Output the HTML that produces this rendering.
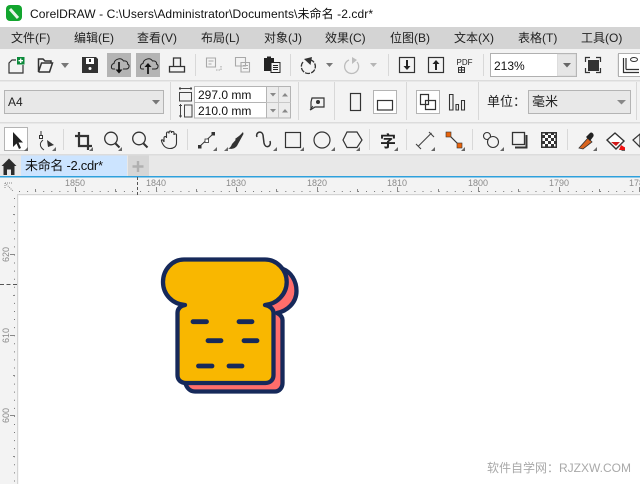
<!DOCTYPE html>
<html><head><meta charset="utf-8">
<style>
html,body{margin:0;padding:0;background:#fff;width:640px;height:484px;overflow:hidden}
svg{display:block;font-family:"Liberation Sans","Noto Sans CJK SC",sans-serif}
</style></head><body>
<svg xmlns="http://www.w3.org/2000/svg" width="640" height="484" viewBox="0 0 640 484">
<defs>
<pattern id="ck" width="6" height="6" patternUnits="userSpaceOnUse" x="221" y="132"><rect width="6" height="6" fill="#fff"/><rect width="3" height="3" fill="#333"/><rect x="3" y="3" width="3" height="3" fill="#333"/></pattern>
</defs>
<rect width="640" height="484" fill="#fff"/>
<!-- title -->
<rect x="6" y="5" width="16" height="16" rx="4" fill="#12a52e"/>
<path d="M10 9l8 9" stroke="#e8f5e8" stroke-width="3"/>
<text x="30" y="18" font-size="12" fill="#111" textLength="343">CorelDRAW - C:\Users\Administrator\Documents\未命名 -2.cdr*</text>
<!-- bars -->
<rect y="27" width="640" height="22" fill="#d4d4d4"/>
<rect y="49" width="640" height="128" fill="#f3f3f3"/>
<rect y="80" width="640" height="1.5" fill="#dcdcdc"/>
<rect y="122" width="640" height="1.5" fill="#dcdcdc"/>
<rect y="155" width="640" height="21" fill="#e8e8e8"/>
<rect y="154" width="640" height="1.5" fill="#dcdcdc"/>
<g font-size="12" fill="#222">
<text x="11" y="42">文件(F)</text><text x="74" y="42">编辑(E)</text><text x="137" y="42">查看(V)</text><text x="201" y="42">布局(L)</text><text x="264" y="42">对象(J)</text><text x="325" y="42">效果(C)</text><text x="390" y="42">位图(B)</text><text x="454" y="42">文本(X)</text><text x="518" y="42">表格(T)</text><text x="581" y="42">工具(O)</text>
</g>
<!-- separators -->
<g stroke="#d8d8d8" stroke-width="1">
<path d="M195.500 54V76M290.500 54V76M388.500 54V76M483.500 54V76M618 54V76"/>
<path d="M170.500 82V120M298.500 82V120M334.500 82V120M406.500 82V120M478.500 82V120M636.500 82V120"/>
<path d="M63.500 129V150M187.500 129V150M369.500 129V150M406.500 129V150M472.500 129V150M567.500 129V150"/>
</g>
<!-- toolbar 1 -->
<g fill="none" stroke="#333" stroke-width="1.200">
<path d="M16 60H12L9 63V73H23V65"/>
<path d="M38.500 72V59H43L45 61H51V63M38.500 72H49.500L52.500 63H41.500L38.500 72" stroke-width="1.500"/>
</g>
<rect x="17" y="57" width="7.500" height="7.500" fill="#0b8a3a"/><path d="M18.500 60.700H23M20.700 58.500V63" stroke="#fff" stroke-width="1.300"/>
<path d="M61 63H69L65 68Z" fill="#777"/>
<path d="M82 57H96L98 59V73H82Z" fill="#333"/><rect x="86" y="58" width="8" height="6" fill="#fff"/><rect x="89" y="59" width="2" height="3" fill="#333"/><circle cx="90" cy="68.500" r="1.500" fill="#fff"/>
<rect x="107" y="53" width="24" height="24" fill="#b4b4b4"/><rect x="136" y="53" width="24" height="24" fill="#b4b4b4"/>
<g fill="none" stroke="#222" stroke-width="1">
<path d="M115 69H113C110.500 69 111 64 114 63.500C114.500 59 121 57 123.500 61C127 60.500 128 63 127.500 64C130 65 129.500 69 126 69H123"/>
<path d="M144 69H142C139.500 69 140 64 143 63.500C143.500 59 150 57 152.500 61C156 60.500 157 63 156.500 64C159 65 158.500 69 155 69H152"/>
</g>
<path d="M119 62V71" stroke="#111" stroke-width="1.700"/><path d="M115.500 69.500H122.500L119 73.500Z" fill="#111"/>
<path d="M148 66V74" stroke="#111" stroke-width="1.700"/><path d="M144.500 67H151.500L148 63Z" fill="#111"/>
<path d="M173.500 66V58H180.500V66M169.500 66.500H184.500V72H169.500Z" fill="none" stroke="#333" stroke-width="1.300"/>
<g fill="none" stroke="#a8a8a8" stroke-width="1.100">
<path d="M206.500 58H215.500V67H206.500ZM208.500 61H213.500M208.500 64H211.500"/><path d="M216 70H221V65" stroke-dasharray="1.500 1"/>
<path d="M235.500 57.500H245.500V66H235.500ZM241 62.500H249.500V72H241ZM243 65.500H248M243 68.500H248"/>
</g>
<path d="M264 58H274V71H264Z" fill="#222"/><rect x="267" y="56.500" width="4" height="3" fill="#222"/>
<rect x="271" y="62.500" width="9" height="10" fill="#f3f3f3" stroke="#222"/><path d="M273 65.500H278M273 67.500H278M273 69.500H278" stroke="#222"/>
<path d="M303 62A7 7 0 1 0 311 60" fill="none" stroke="#333" stroke-width="1.300" stroke-dasharray="5 1.200"/><path d="M305 59L313 57L311.500 65Z" fill="#333" transform="translate(-1 0)"/>
<path d="M326 63H333L329.500 67Z" fill="#777"/>
<path d="M357 62A7 7 0 1 1 349 60" fill="none" stroke="#bdbdbd" stroke-width="1.300"/><path d="M352 57L357 60L352 64Z" fill="#bdbdbd"/>
<path d="M370 63H377L373.500 67Z" fill="#b5b5b5"/>
<rect x="399.500" y="57.500" width="15" height="15" fill="none" stroke="#333" stroke-width="1.200"/><path d="M407 60V67" stroke="#222" stroke-width="2"/><path d="M403.500 66H410.500L407 70Z" fill="#222"/>
<rect x="428.500" y="57.500" width="15" height="15" fill="none" stroke="#333" stroke-width="1.200"/><path d="M436 63V70" stroke="#222" stroke-width="2"/><path d="M432.500 64H439.500L436 60Z" fill="#222"/>
<text x="456.500" y="65" font-size="8" fill="#222" textLength="16">PDF</text>
<path d="M458.500 67.500H464.500V72.500H458.500ZM461.500 66V72.500M459 70H464" fill="none" stroke="#333"/>
<rect x="490.500" y="53.500" width="86" height="23" fill="#fff" stroke="#b0b0b0"/>
<rect x="557.500" y="54" width="18.500" height="22" fill="#e6e6e6" stroke="#c8c8c8" stroke-width="0.500"/>
<path d="M563 63H571L567 67.500Z" fill="#666"/>
<text x="494" y="70" font-size="12" fill="#111">213%</text>
<rect x="588" y="60" width="11" height="11" fill="#333"/>
<path d="M585.500 62V57.500H590M596 57.500H600.500V62M600.500 68V72.500H596M590 72.500H585.500V68" fill="none" stroke="#333" stroke-width="1.200"/>
<rect x="618.500" y="53.500" width="24" height="23" fill="#fff" stroke="#b0b0b0"/>
<path d="M623.500 58V72.500H639M626 69.500H639M626 58V69.500" fill="none" stroke="#333" stroke-width="1.200"/>
<ellipse cx="634" cy="59.500" rx="3.500" ry="2" fill="none" stroke="#333"/>
<!-- property bar -->
<rect x="4.500" y="90.500" width="159" height="23" fill="#e8e8e8" stroke="#b4b4b4"/>
<text x="8" y="106" font-size="12" fill="#222">A4</text>
<path d="M152 100H160L156 104.500Z" fill="#777"/>
<g fill="none" stroke="#444" stroke-width="1">
<rect x="179.500" y="92.500" width="12" height="8.500"/><path d="M179 88.500H192M180 87V90M191 87V90"/>
<rect x="184.500" y="105" width="7.500" height="12"/><path d="M180.500 104V117.500M179 105.500H182M179 116H182"/>
</g>
<rect x="194.500" y="86.500" width="72" height="31.500" fill="#fff" stroke="#b4b4b4"/>
<path d="M194.500 102.500H266.500" stroke="#b4b4b4"/>
<rect x="266.500" y="86.500" width="24" height="31.500" fill="#ececec" stroke="#b4b4b4"/>
<path d="M266.500 102.500H290.500M278.500 87V118" stroke="#c8c8c8"/>
<g fill="#888"><path d="M270 93H276L273 96.500ZM282 96.500H288L285 93ZM270 109H276L273 112.500ZM282 112.500H288L285 109Z"/></g>
<text x="198" y="99" font-size="12" fill="#111">297.0 mm</text>
<text x="198" y="115" font-size="12" fill="#111">210.0 mm</text>
<path d="M312 98H324V107H315L311 109.500V102Z" fill="none" stroke="#333" stroke-width="1.200"/><circle cx="318" cy="102" r="2" fill="#333"/><path d="M310 110L313 106" stroke="#333"/>
<rect x="350.500" y="93.500" width="10" height="17" fill="none" stroke="#333" stroke-width="1.200"/>
<rect x="373.500" y="90.500" width="23" height="23" fill="#fff" stroke="#b4b4b4"/>
<rect x="377.500" y="100.500" width="15" height="9.500" fill="none" stroke="#333" stroke-width="1.200"/>
<rect x="416.500" y="90.500" width="23" height="23" fill="#fff" stroke="#b4b4b4"/>
<path d="M420.500 94.500H428.500V104.500H420.500ZM425.500 100.500H435.500V109.500H425.500Z" fill="none" stroke="#333" stroke-width="1.200"/>
<path d="M449.500 94.500H453V110H449.500ZM456 104.500H458.500V110H456ZM461.500 100.500H464.500V110H461.500Z" fill="none" stroke="#333" stroke-width="1.100"/>
<text x="487" y="106" font-size="13" fill="#222">单位：</text>
<rect x="528.500" y="90.500" width="102" height="23" fill="#e8e8e8" stroke="#b4b4b4"/>
<text x="532" y="106" font-size="13" fill="#222">毫米</text>
<path d="M617 100H626L621.500 104.500Z" fill="#888"/>
<!-- toolbox -->
<rect x="4.500" y="127.500" width="23" height="23" fill="#fff" stroke="#b4b4b4"/>
<path d="M13 132V147L16.500 143.500L19 149L21 148L18.500 142.500H23Z" fill="#222"/>
<g fill="#666"><path d="M28 147V151H24ZM56 147V151H52ZM93 147V151H89ZM122 147V151H118ZM277 147V151H273ZM228 147V151H224ZM304 147V151H300ZM335 147V151H331ZM360 147V151H356ZM398 147V151H394ZM435 147V151H431ZM465 147V151H461ZM504 147V151H500ZM597 147V151H593ZM625 147V151H621ZM217 147V151H213Z"/></g>
<path d="M41 131V139M43 140C38 144 41 148 44 150" fill="none" stroke="#333"/><rect x="39.500" y="135.500" width="3" height="3" fill="#fff" stroke="#333"/><path d="M47 140L54 145L48 147Z" fill="#333"/>
<path d="M79 132V146H92M75 136H88V150" fill="none" stroke="#333" stroke-width="2.200"/>
<circle cx="111" cy="138.500" r="6.300" fill="none" stroke="#333" stroke-width="1.300"/><path d="M115.500 143.500L119.500 147.500" stroke="#333" stroke-width="2"/>
<circle cx="139" cy="138.500" r="6.300" fill="none" stroke="#333" stroke-width="1.300"/><path d="M143.500 143.500L147.500 147.500" stroke="#333" stroke-width="2"/>
<path d="M164 142V138C164 136 166.500 136 166.500 138V133.500C166.500 131.500 169 131.500 169 133.500V132.500C169 130.500 171.500 130.500 171.500 132.500V133C171.500 131 174 131 174 133V135C174 133.500 176.500 133.500 176.500 135V143C176.500 147 173 148.500 170 148.500C166 148.500 163 146 161.500 141C161 139.500 163 139 164 142Z" fill="none" stroke="#333" stroke-width="1.100"/>
<path d="M199 147L213 134" stroke="#333"/><rect x="198" y="145" width="3.500" height="3.500" fill="#333"/><rect x="205" y="139" width="3.500" height="3.500" fill="#fff" stroke="#333" stroke-width="0.800"/><rect x="211.500" y="132" width="3.500" height="3.500" fill="#333"/>
<path d="M243 133L237 141L235 139Z" fill="#333"/><path d="M243 132L236.500 139L232 144C231 147 229 148.500 228 148.500C231 149.500 236 149 238 144L243.500 134Z" fill="#333"/>
<path d="M257 137C255 132 262 130 263 135L264 143C265 149 272 147 270 141" fill="none" stroke="#333" stroke-width="1.500"/>
<rect x="285.500" y="132.500" width="15" height="15" fill="none" stroke="#333" stroke-width="1.200"/>
<circle cx="322" cy="140" r="8" fill="none" stroke="#333" stroke-width="1.200"/>
<path d="M347 132H357L362 140L357 147.500H347L343 140Z" fill="none" stroke="#333" stroke-width="1.200"/>
<text x="380" y="147" font-size="16" font-weight="bold" fill="#222">字</text>
<path d="M418.500 146L431.500 133M416 144L421 149M429 132L434 137" fill="none" stroke="#444" stroke-width="1.100"/>
<path d="M449 135L459 145" stroke="#333" stroke-width="1.200"/><rect x="446" y="132" width="5" height="5" fill="#e8630a" stroke="#333" stroke-width=".6"/><rect x="457" y="143" width="5" height="5" fill="#e8630a" stroke="#333" stroke-width=".6"/>
<circle cx="487" cy="136" r="3.500" fill="none" stroke="#333" stroke-width="1.100"/><circle cx="493" cy="142" r="5.500" fill="#f3f3f3" stroke="#333" stroke-width="1.100"/>
<rect x="512.500" y="132.500" width="12" height="12" fill="none" stroke="#333" stroke-width="1.300"/><path d="M526.500 135V147.500H515" fill="none" stroke="#333" stroke-width="2"/>
<rect x="541" y="132" width="16" height="16" fill="#333"/><rect x="542.500" y="133.500" width="13" height="13" fill="url(#ck)"/>
<path d="M579 148L588 138L592 142L583 149Z" fill="#d9641e" stroke="#333" stroke-width=".8"/><path d="M586 137L590 133C592 131 595 135 593 137L590 141Z" fill="#222"/>
<path d="M607 140L615 133L624 141L616 149Z" fill="#fff" stroke="#333" stroke-width="1.400"/><path d="M611 142H620L616 146Z" fill="#d01818"/><path d="M621 145L625 147.500V150H619Z" fill="#f01010"/>
<path d="M633 140L640 134V147Z" fill="none" stroke="#333" stroke-width="1.200"/>
<!-- tab row -->
<path d="M1.500 166L9 158.500L16.500 166H14.500V175H11V169.500H7V175H3.500V166Z" fill="#2c2c2c"/>
<rect x="21" y="155.500" width="106" height="20.500" fill="#cce4ff"/>
<text x="25" y="170" font-size="13" fill="#111" textLength="78">未命名 -2.cdr*</text>
<rect x="128" y="155.500" width="21" height="20.500" fill="#d6d6d6"/>
<path d="M138 161V172M132.500 166.500H143.500" stroke="#b0b0b0" stroke-width="2.400"/>
<rect y="176" width="640" height="1.500" fill="#2ea0dc"/>
<!-- rulers -->
<rect y="177.500" width="640" height="17" fill="#f3f3f3"/>
<rect y="177.500" width="17.500" height="306.500" fill="#f3f3f3"/>
<rect x="17" y="194" width="623" height="1.200" fill="#d4d4d4"/>
<rect x="17" y="194" width="1.200" height="290" fill="#d4d4d4"/>
<path d="M19 191.500H640" stroke="#777" stroke-dasharray="1 7.070"/>
<path d="M35.500 189V192M75.500 187V192M115.500 189V192M156.500 187V192M196.500 189V192M236.500 187V192M276.500 189V192M317.500 187V192M357.500 189V192M397.500 187V192M438.500 189V192M478.500 187V192M518.500 189V192M559.500 187V192M599.500 189V192M639.500 187V192" stroke="#888"/>
<g font-size="9" fill="#8a8a8a">
<text x="65" y="186">1850</text><text x="146" y="186">1840</text><text x="226" y="186">1830</text><text x="307" y="186">1820</text><text x="387" y="186">1810</text><text x="468" y="186">1800</text><text x="549" y="186">1790</text><text x="629" y="186">178</text>
<text transform="translate(9 262) rotate(-90)">620</text><text transform="translate(9 343) rotate(-90)">610</text><text transform="translate(9 423) rotate(-90)">600</text>
</g>
<path d="M14.500 198V484" stroke="#777" stroke-dasharray="1 7.070"/>
<path d="M10 254.500H15M10 335.500H15M10 415.500H15M13 214.500H15M13 295.500H15M13 375.500H15M13 456.500H15" stroke="#888"/>
<path d="M137.500 177V195" stroke="#555" stroke-dasharray="3 2"/>
<path d="M0 284.500H18" stroke="#555" stroke-dasharray="4 2.500"/>
<path d="M5 183H12M5 183V189M5 183L13 191" stroke="#888" stroke-dasharray="1 1"/>
<!-- bread -->
<g stroke="#16295a" stroke-width="4.300" stroke-linejoin="round">
<path d="M283 269C291 272 296.500 281 296.500 291C296.500 303 287 311 277 313C281 315 282.500 317 282.500 320V383C282.500 388 279 391.500 275 391.500H195C190 391.500 186.500 388 185 382Z" fill="#ff6d6b"/>
<path d="M184 259.500H265C277 259.500 286.700 270 286.700 282C286.700 294 277 304 265 305C270 306 273.500 309 273.500 313V375C273.500 380 270 383 265.500 383H186C181 383 177.500 380 177.500 375V313C177.500 309 180 306 185 305C172 304 163 294 163 282C163 270 172 259.500 184 259.500Z" fill="#f9b700"/>
</g>
<g stroke="#16295a" stroke-width="4.800" stroke-linecap="round" fill="none">
<path d="M193 321.700H206.500M239 321.700H252M208 340.700H221M244 340.700H257M198.500 366H212M229 366H242"/>
</g>
<!-- watermark -->
<text x="487" y="472" font-size="12" fill="#a9a9a9">软件自学网：RJZXW.COM</text>
</svg>
</body></html>
